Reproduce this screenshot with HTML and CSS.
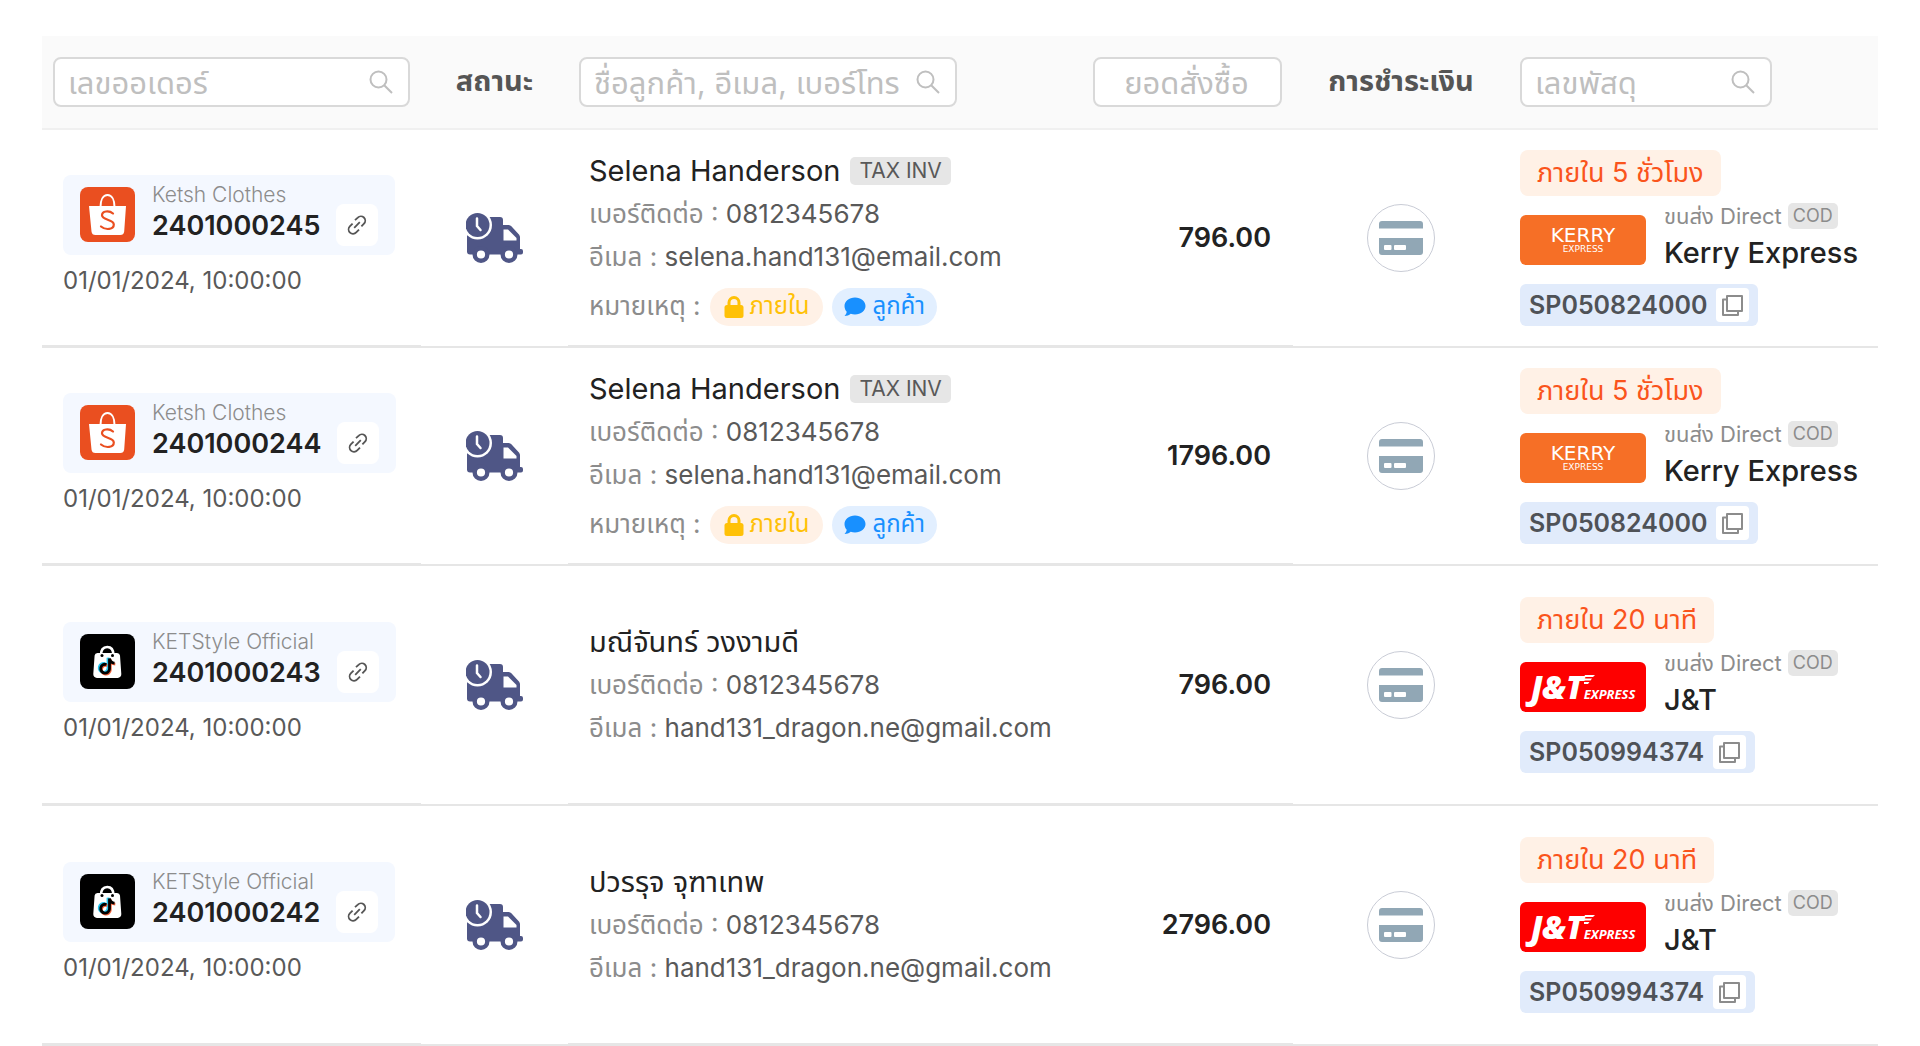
FILE: index.html
```html
<!DOCTYPE html>
<html lang="th">
<head>
    <meta charset="UTF-8">
    <meta name="viewport" content="width=device-width, initial-scale=1">
    <title>Orders</title>
    <link rel="stylesheet" href="styles.css">
</head>
<body>
    <!-- shared icons -->
    <svg class="sprite" aria-hidden="true">
        <symbol id="icon-search" viewBox="0 0 24 24">
            <circle cx="9.5" cy="9.5" r="8" fill="none" stroke="currentColor" stroke-width="2"/>
            <path d="M15.2 15.2L23 23" fill="none" stroke="currentColor" stroke-width="2"/>
        </symbol>
        <symbol id="icon-link" viewBox="0 0 20 20">
            <path d="M8 5.2L10.8 2.6a4.2 4.2 0 0 1 6.2 6L14.4 11.4M12 14.6L9.2 17.4a4.2 4.2 0 0 1-6.4-6L5.6 8.6M7.2 12.8L12.8 7.2" fill="none" stroke="currentColor" stroke-width="1.8"/>
        </symbol>
        <symbol id="icon-copy" viewBox="0 0 21 21">
            <path d="M5 1h15v15H5zM5 4.5H1V20h15v-4" fill="none" stroke="currentColor" stroke-width="2" stroke-linejoin="round"/>
        </symbol>
        <symbol id="icon-lock" viewBox="0 0 20 22">
            <path d="M5 10V6.5a5 5 0 0 1 10 0V10" fill="none" stroke="currentColor" stroke-width="3"/>
            <rect x="0.5" y="9" width="19" height="13" rx="2.5" fill="currentColor"/>
        </symbol>
        <symbol id="icon-chat" viewBox="0 0 22 20">
            <path d="M11 .5C17 .5 21.500 4.300 21.500 9S17 17.500 11 17.500c-1.500 0-3-.2-4.300-.7C5 18.200 3 19 .5 19c1.300-1.200 2-2.600 2.200-4.200C1.200 13.200.5 11.200.5 9 .5 4.300 5 .5 11 .5z" fill="currentColor"/>
        </symbol>
        <symbol id="icon-truck" viewBox="0 0 57 50">
            <path d="M14 4h20a3 3 0 0 1 3 3v5h5c1.500 0 2.600.5 3.600 1.500L52.500 21c1 1 1.500 2.200 1.500 3.600V36h1a2 2 0 0 1 2 2v1.500a2 2 0 0 1-2 2H4a3 3 0 0 1-3-3V10z" fill="#4f5686"/>
            <path d="M37.500 16.500H42L50.500 25v2.500h-13z" fill="#fff"/>
            <circle cx="11.500" cy="12" r="14.500" fill="#fff"/>
            <circle cx="11.500" cy="12" r="12" fill="#4f5686"/>
            <path d="M11 5.500v7.500l3.500 4" fill="none" stroke="#fff" stroke-width="2.500" stroke-linecap="round"/>
            <circle cx="15" cy="41.500" r="6.300" fill="#fff" stroke="#4f5686" stroke-width="4.400"/>
            <circle cx="43" cy="41.500" r="6.300" fill="#fff" stroke="#4f5686" stroke-width="4.400"/>
        </symbol>
        <symbol id="icon-card" viewBox="0 0 44 34">
            <path d="M3 0h38a3 3 0 0 1 3 3v4.500H0V3a3 3 0 0 1 3-3zM0 17h44v14a3 3 0 0 1-3 3H3a3 3 0 0 1-3-3z" fill="#91a7b5"/>
            <rect x="5" y="24" width="7.500" height="5" rx="1" fill="#fff"/>
            <rect x="15" y="24" width="12" height="5" rx="1" fill="#fff"/>
        </symbol>
        <symbol id="logo-shopee" viewBox="0 0 55 55">
            <rect width="55" height="55" rx="8" fill="#ea4f20"/>
            <path d="M9 19h37l-1.800 25.500a4 4 0 0 1-4 3.500H15.500a4 4 0 0 1-4-3.500z" fill="#fff"/>
            <path d="M20.500 20c0-7 2.600-12 7-12s7 5 7 12" fill="none" stroke="#fff" stroke-width="2"/>
            <path d="M33 26.500c-4-3.500-11-2.500-11 1.800 0 5.200 11.800 3.600 11.800 9.200 0 5-8 6-12.800 2" fill="none" stroke="#ea4f20" stroke-width="2.200" stroke-linecap="round"/>
        </symbol>
        <symbol id="logo-tiktok" viewBox="0 0 55 55">
            <rect width="55" height="55" rx="8" fill="#000"/>
            <path d="M17.500 19h19.500a3 3 0 0 1 3 2.600l1.300 18.500a3.600 3.600 0 0 1-3.600 3.900h-20.800a3.600 3.600 0 0 1-3.600-3.900l1.300-18.500a3 3 0 0 1 2.900-2.600z" fill="#fff"/>
            <path d="M21 21c0-5 2-8 6.200-8s6.200 3 6.200 8" fill="none" stroke="#fff" stroke-width="2.600"/>
            <circle cx="22" cy="21.500" r="1.500" fill="#000"/>
            <circle cx="32.500" cy="21.500" r="1.500" fill="#000"/>
            <g fill="none" stroke-width="2.800">
                <path d="M26.500 30.500a4.400 4.400 0 1 0 3 4.400V24.500c.5 3 2.500 4.500 5 4.700" transform="translate(-1.500 -.8)" stroke="#25c5ee"/>
                <path d="M26.500 30.500a4.400 4.400 0 1 0 3 4.400V24.500c.5 3 2.500 4.500 5 4.700" transform="translate(.8 1)" stroke="#f4623a"/>
                <path d="M26.500 30.500a4.400 4.400 0 1 0 3 4.400V24.500c.5 3 2.500 4.500 5 4.700" stroke="#000"/>
            </g>
        </symbol>
        <symbol id="jnt-wing" viewBox="0 0 11 10">
            <path d="M1 0h10L9 2H0zM0 3.500h8L6.500 5.500H0zM0 7h5.500L4 9H0z" fill="#fff"/>
        </symbol>
    </svg>

    <table class="orders">
        <colgroup>
            <col class="col-order">
            <col class="col-status">
            <col class="col-customer">
            <col class="col-amount">
            <col class="col-payment">
            <col class="col-tracking">
        </colgroup>
        <thead>
            <tr>
                <th>
                    <label class="search">
                        <input type="text" placeholder="เลขออเดอร์" aria-label="เลขออเดอร์">
                        <svg><use href="#icon-search"/></svg>
                    </label>
                </th>
                <th>สถานะ</th>
                <th>
                    <label class="search">
                        <input type="text" placeholder="ชื่อลูกค้า, อีเมล, เบอร์โทร" aria-label="ชื่อลูกค้า, อีเมล, เบอร์โทร">
                        <svg><use href="#icon-search"/></svg>
                    </label>
                </th>
                <th>
                    <label class="search center">
                        <input type="text" placeholder="ยอดสั่งซื้อ" aria-label="ยอดสั่งซื้อ">
                    </label>
                </th>
                <th>การชำระเงิน</th>
                <th>
                    <label class="search short">
                        <input type="text" placeholder="เลขพัสดุ" aria-label="เลขพัสดุ">
                        <svg><use href="#icon-search"/></svg>
                    </label>
                </th>
            </tr>
        </thead>
        <tbody>
            <tr class="with-note">
                <td class="order">
                    <div class="order-box">
                        <svg class="shop-logo"><use href="#logo-shopee"/></svg>
                        <div class="order-info">
                            <div class="shop">Ketsh Clothes</div>
                            <div class="number">2401000245</div>
                        </div>
                        <button class="link-btn" aria-label="Link"><svg><use href="#icon-link"/></svg></button>
                    </div>
                    <div class="date">01/01/2024, 10:00:00</div>
                </td>
                <td class="status"><svg class="truck"><use href="#icon-truck"/></svg></td>
                <td class="customer">
                    <div class="name">Selena Handerson <span class="tag">TAX INV</span></div>
                    <div class="line"><span class="label">เบอร์ติดต่อ :</span> 0812345678</div>
                    <div class="line"><span class="label">อีเมล :</span> selena.hand131@email.com</div>
                    <div class="notes">
                        <span class="label">หมายเหตุ :</span>
                        <span class="pill internal"><svg><use href="#icon-lock"/></svg>ภายใน</span>
                        <span class="pill client"><svg><use href="#icon-chat"/></svg>ลูกค้า</span>
                    </div>
                </td>
                <td class="amount">796.00</td>
                <td class="payment"><span class="circle"><svg><use href="#icon-card"/></svg></span></td>
                <td class="tracking">
                    <span class="deadline">ภายใน 5 ชั่วโมง</span>
                    <div class="carrier">
                        <div class="carrier-logo kerry">
                            <span class="kerry-name">KERRY</span>
                            <span class="kerry-sub">EXPRESS</span>
                        </div>
                        <div>
                            <div class="direct">ขนส่ง Direct <span class="tag small">COD</span></div>
                            <div class="carrier-name">Kerry Express</div>
                        </div>
                    </div>
                    <div class="parcel">SP050824000 <button class="copy-btn" aria-label="Copy"><svg><use href="#icon-copy"/></svg></button></div>
                </td>
            </tr>
            <tr class="with-note">
                <td class="order">
                    <div class="order-box">
                        <svg class="shop-logo"><use href="#logo-shopee"/></svg>
                        <div class="order-info">
                            <div class="shop">Ketsh Clothes</div>
                            <div class="number">2401000244</div>
                        </div>
                        <button class="link-btn" aria-label="Link"><svg><use href="#icon-link"/></svg></button>
                    </div>
                    <div class="date">01/01/2024, 10:00:00</div>
                </td>
                <td class="status"><svg class="truck"><use href="#icon-truck"/></svg></td>
                <td class="customer">
                    <div class="name">Selena Handerson <span class="tag">TAX INV</span></div>
                    <div class="line"><span class="label">เบอร์ติดต่อ :</span> 0812345678</div>
                    <div class="line"><span class="label">อีเมล :</span> selena.hand131@email.com</div>
                    <div class="notes">
                        <span class="label">หมายเหตุ :</span>
                        <span class="pill internal"><svg><use href="#icon-lock"/></svg>ภายใน</span>
                        <span class="pill client"><svg><use href="#icon-chat"/></svg>ลูกค้า</span>
                    </div>
                </td>
                <td class="amount">1796.00</td>
                <td class="payment"><span class="circle"><svg><use href="#icon-card"/></svg></span></td>
                <td class="tracking">
                    <span class="deadline">ภายใน 5 ชั่วโมง</span>
                    <div class="carrier">
                        <div class="carrier-logo kerry">
                            <span class="kerry-name">KERRY</span>
                            <span class="kerry-sub">EXPRESS</span>
                        </div>
                        <div>
                            <div class="direct">ขนส่ง Direct <span class="tag small">COD</span></div>
                            <div class="carrier-name">Kerry Express</div>
                        </div>
                    </div>
                    <div class="parcel">SP050824000 <button class="copy-btn" aria-label="Copy"><svg><use href="#icon-copy"/></svg></button></div>
                </td>
            </tr>
            <tr>
                <td class="order">
                    <div class="order-box">
                        <svg class="shop-logo"><use href="#logo-tiktok"/></svg>
                        <div class="order-info">
                            <div class="shop">KETStyle Official</div>
                            <div class="number">2401000243</div>
                        </div>
                        <button class="link-btn" aria-label="Link"><svg><use href="#icon-link"/></svg></button>
                    </div>
                    <div class="date">01/01/2024, 10:00:00</div>
                </td>
                <td class="status"><svg class="truck"><use href="#icon-truck"/></svg></td>
                <td class="customer">
                    <div class="name">มณีจันทร์ วงงามดี</div>
                    <div class="line"><span class="label">เบอร์ติดต่อ :</span> 0812345678</div>
                    <div class="line"><span class="label">อีเมล :</span> hand131_dragon.ne@gmail.com</div>
                </td>
                <td class="amount">796.00</td>
                <td class="payment"><span class="circle"><svg><use href="#icon-card"/></svg></span></td>
                <td class="tracking">
                    <span class="deadline">ภายใน 20 นาที</span>
                    <div class="carrier">
                        <div class="carrier-logo jnt">
                            <span class="jnt-name">J&amp;T</span>
                            <svg><use href="#jnt-wing"/></svg>
                            <span class="jnt-sub">EXPRESS</span>
                        </div>
                        <div>
                            <div class="direct">ขนส่ง Direct <span class="tag small">COD</span></div>
                            <div class="carrier-name">J&amp;T</div>
                        </div>
                    </div>
                    <div class="parcel">SP050994374 <button class="copy-btn" aria-label="Copy"><svg><use href="#icon-copy"/></svg></button></div>
                </td>
            </tr>
            <tr>
                <td class="order">
                    <div class="order-box">
                        <svg class="shop-logo"><use href="#logo-tiktok"/></svg>
                        <div class="order-info">
                            <div class="shop">KETStyle Official</div>
                            <div class="number">2401000242</div>
                        </div>
                        <button class="link-btn" aria-label="Link"><svg><use href="#icon-link"/></svg></button>
                    </div>
                    <div class="date">01/01/2024, 10:00:00</div>
                </td>
                <td class="status"><svg class="truck"><use href="#icon-truck"/></svg></td>
                <td class="customer">
                    <div class="name">ปวรรุจ จุฑาเทพ</div>
                    <div class="line"><span class="label">เบอร์ติดต่อ :</span> 0812345678</div>
                    <div class="line"><span class="label">อีเมล :</span> hand131_dragon.ne@gmail.com</div>
                </td>
                <td class="amount">2796.00</td>
                <td class="payment"><span class="circle"><svg><use href="#icon-card"/></svg></span></td>
                <td class="tracking">
                    <span class="deadline">ภายใน 20 นาที</span>
                    <div class="carrier">
                        <div class="carrier-logo jnt">
                            <span class="jnt-name">J&amp;T</span>
                            <svg><use href="#jnt-wing"/></svg>
                            <span class="jnt-sub">EXPRESS</span>
                        </div>
                        <div>
                            <div class="direct">ขนส่ง Direct <span class="tag small">COD</span></div>
                            <div class="carrier-name">J&amp;T</div>
                        </div>
                    </div>
                    <div class="parcel">SP050994374 <button class="copy-btn" aria-label="Copy"><svg><use href="#icon-copy"/></svg></button></div>
                </td>
            </tr>
        </tbody>
    </table>
</body>
</html>
```
FILE: styles.css
```css
* {
    box-sizing: border-box;
}
body {
    margin: 0;
    padding: 36px 42px 0;
    background-color: #fff;
    color: #222;
    font-family: Inter, "Noto Sans Thai", "Noto Sans", sans-serif;
    font-size: 24px;
}
svg {
    display: block;
    flex-shrink: 0;
}
button {
    display: flex;
    align-items: center;
    justify-content: center;
    padding: 0;
    border: none;
    background-color: #fff;
    cursor: pointer;
}
.sprite {
    position: absolute;
    width: 0;
    height: 0;
}

/* table */
.orders {
    width: 100%;
    table-layout: fixed;
    border-collapse: separate;
    border-spacing: 0;
}
.col-order {
    width: 379px;
}
.col-status {
    width: 147px;
}
.col-amount {
    width: 211px;
}
.col-payment {
    width: 216px;
}
.col-tracking {
    width: 369px;
}
th {
    height: 94px;
    padding: 0 11px;
    background-color: #fafafa;
    border-bottom: 2px solid #f0f0f0;
    color: #555;
    font-size: 29px;
    font-weight: 700;
    text-align: center;
    white-space: nowrap;
}
th:nth-child(3) {
    padding-right: 125px;
}
td {
    height: 240px;
    padding: 0 11px;
    border-bottom: 2px solid #e6e6e6;
    vertical-align: middle;
    white-space: nowrap;
}
.with-note td {
    height: 218px;
}
td.order,
td.customer,
td.amount {
    padding: 0 22px 0 21px;
    border-bottom-width: 3px;
}

/* search boxes */
.search {
    display: flex;
    align-items: center;
    height: 50px;
    padding: 0 15px 0 13px;
    border: 2px solid #d9d9d9;
    border-radius: 8px;
    background-color: #fff;
    color: #bfbfbf;
}
.search.short {
    width: 252px;
}
.search input {
    flex: 1;
    min-width: 0;
    height: 46px;
    padding: 0;
    border: none;
    outline: none;
    background: none;
    color: #555;
    font-family: inherit;
    font-size: 31px;
}
.search input::placeholder {
    color: #bfbfbf;
    opacity: 1;
}
.search svg {
    width: 24px;
    height: 24px;
}
.search.center input {
    text-align: center;
}

/* order */
.order-box {
    display: inline-flex;
    align-items: center;
    height: 80px;
    padding: 0 17px;
    border-radius: 8px;
    background-color: #f4f8ff;
}
.shop-logo {
    width: 55px;
    height: 55px;
    margin-right: 17px;
}
.order-info {
    margin-bottom: 8px;
}
.shop {
    color: #8c8c8c;
    font-size: 21px;
    font-weight: 300;
    line-height: 30px;
}
.number {
    font-size: 27px;
    font-weight: 600;
    line-height: 32px;
}
.link-btn {
    align-self: flex-end;
    width: 42px;
    height: 42px;
    margin: 0 0 9px 16px;
    border-radius: 8px;
    color: #555;
}
.link-btn svg {
    width: 20px;
    height: 20px;
}
.date {
    margin-top: 6px;
    color: #595959;
    line-height: 40px;
}
.truck {
    width: 57px;
    height: 50px;
    margin: 0 auto;
}

/* customer */
.name {
    display: flex;
    align-items: center;
    font-size: 29px;
    line-height: 43px;
}
.tag {
    margin-left: 10px;
    padding: 0 9px;
    border-radius: 5px;
    background-color: #e6e6e6;
    color: #595959;
    font-size: 21px;
    line-height: 28px;
}
.line {
    color: #595959;
    font-size: 26px;
    line-height: 43px;
}
.label {
    color: #8c8c8c;
    font-size: 26px;
}
.notes {
    display: flex;
    align-items: center;
    gap: 9px;
    height: 38px;
    margin-top: 10px;
}
.pill {
    display: flex;
    align-items: center;
    gap: 6px;
    height: 38px;
    padding: 0 14px;
    border-radius: 19px;
}
.pill svg {
    width: 20px;
    height: 22px;
}
.pill.internal {
    background-color: #fff1e6;
    color: #ffc107;
}
.pill.client {
    padding: 0 12px;
    background-color: #e2efff;
    color: #1890ff;
}
.pill.client svg {
    width: 22px;
}
.amount {
    font-size: 27px;
    font-weight: 600;
    text-align: right;
}
.circle {
    display: flex;
    align-items: center;
    justify-content: center;
    width: 68px;
    height: 68px;
    margin: 0 auto;
    border: 1px solid #c9ccd6;
    border-radius: 50%;
}
.circle svg {
    width: 44px;
    height: 34px;
}

/* tracking */
.deadline {
    display: block;
    width: fit-content;
    padding: 0 17px;
    border-radius: 8px;
    background-color: #fff1e6;
    color: #fa541c;
    font-size: 27px;
    line-height: 46px;
}
.carrier {
    display: flex;
    align-items: center;
    gap: 18px;
    height: 88px;
}
.carrier-logo {
    display: flex;
    width: 126px;
    height: 50px;
    border-radius: 6px;
    color: #fff;
}
.direct {
    display: flex;
    align-items: center;
    color: #8c8c8c;
    font-size: 22px;
    line-height: 26px;
}
.tag.small {
    margin-left: 6px;
    padding: 0 5px;
    color: #8c8c8c;
    font-size: 18px;
    line-height: 26px;
}
.carrier-name {
    font-size: 29px;
    font-weight: 500;
    line-height: 48px;
}
.parcel {
    display: flex;
    align-items: center;
    gap: 9px;
    width: fit-content;
    height: 42px;
    padding: 0 9px;
    border-radius: 6px;
    background-color: #e1ebfb;
    color: #4f5257;
    font-size: 25px;
    font-weight: 600;
}
.copy-btn {
    width: 33px;
    height: 34px;
    border-radius: 4px;
    color: #8c8c8c;
}
.copy-btn svg {
    width: 21px;
    height: 21px;
}

/* carrier logos */
.kerry {
    flex-direction: column;
    align-items: center;
    justify-content: center;
    background-color: #f66f26;
    font-family: "DejaVu Sans", sans-serif;
}
.kerry-name {
    font-size: 20px;
    line-height: 18px;
}
.kerry-sub {
    font-size: 9px;
    line-height: 10px;
}
.jnt {
    align-items: baseline;
    justify-content: center;
    background-color: #fe0000;
    font-family: "Open Sans", sans-serif;
    font-style: italic;
}
.jnt-name {
    font-size: 32px;
    font-weight: 800;
    line-height: 50px;
}
.jnt svg {
    align-self: flex-start;
    width: 11px;
    height: 10px;
    margin: 13px -11px 0 0;
}
.jnt-sub {
    font-size: 13px;
    font-weight: 700;
}
```
